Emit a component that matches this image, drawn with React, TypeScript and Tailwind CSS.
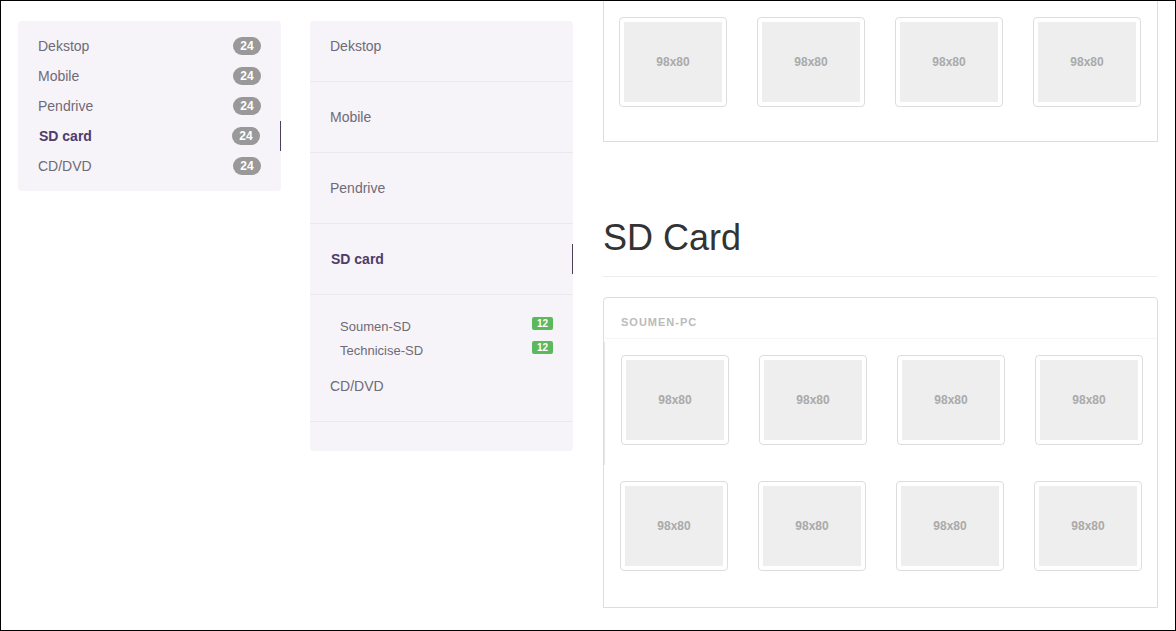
import React from "react";

const leftItems = ["Dekstop", "Mobile", "Pendrive", "SD card", "CD/DVD"];

function Thumb() {
  return (
    <div className="w-[108px] h-[90px] border border-[#dddddd] rounded-[4px] p-[4px] bg-white">
      <div className="w-[98px] h-[80px] bg-[#eeeeee] flex items-center justify-center text-[12px] font-bold text-[#aaaaaa]">
        98x80
      </div>
    </div>
  );
}

function ThumbRow() {
  return (
    <div className="grid grid-cols-[repeat(4,138px)]">
      {[0, 1, 2, 3].map((i) => (
        <div key={i} className="pl-[15px]">
          <Thumb />
        </div>
      ))}
    </div>
  );
}

export default function App() {
  return (
    <div className="w-[1176px] h-[631px] border border-black overflow-hidden bg-white font-['Liberation_Sans',Arial,sans-serif]">
      <div className="flex items-start pl-[17px]">
        {/* Left panel */}
        <div className="w-[263px] mt-[20px] rounded-[4px] bg-[#f6f4f9] pt-[10px] pb-[10px]">
          {leftItems.map((t) => {
            const active = t === "SD card";
            return (
              <div
                key={t}
                className={
                  "flex items-center justify-between h-[30px] pl-[20px] pr-[20px] " +
                  (active ? "border-r border-[#4b3f5c]" : "")
                }
              >
                <span
                  className={
                    active
                      ? "text-[14px] font-bold text-[#4e3b69] pl-px"
                      : "text-[14px] text-[#6f6a77]"
                  }
                >
                  {t}
                </span>
                <span className="w-[28px] h-[18px] rounded-[9px] bg-[#999999] text-white text-[12px] font-bold flex items-center justify-center leading-none">
                  24
                </span>
              </div>
            );
          })}
        </div>

        {/* Middle panel */}
        <div className="w-[263px] ml-[29px] mt-[20px] rounded-[4px] bg-[#f6f4f9] pb-[29px]">
          <div className="border-b border-[#ebe8f0] px-[20px] pt-[10px] pb-[20px]">
            <div className="py-[5px] leading-[20px] text-[14px] text-[#6f6a77]">Dekstop</div>
          </div>
          <div className="border-b border-[#ebe8f0] px-[20px] py-[20px]">
            <div className="py-[5px] leading-[20px] text-[14px] text-[#6f6a77]">Mobile</div>
          </div>
          <div className="border-b border-[#ebe8f0] px-[20px] py-[20px]">
            <div className="py-[5px] leading-[20px] text-[14px] text-[#6f6a77]">Pendrive</div>
          </div>
          <div className="border-b border-[#ebe8f0] pl-[20px] py-[20px]">
            <div className="py-[5px] leading-[20px] text-[14px] font-bold text-[#4e3b69] pl-px border-r border-[#4b3f5c]">
              SD card
            </div>
          </div>
          <div className="pt-[20px] pl-[30px] pr-[20px]">
            {["Soumen-SD", "Technicise-SD"].map((s) => (
              <div key={s} className="flex justify-between items-start h-[24px]">
                <span className="text-[13px] leading-[24px] text-[#6f6a77]">{s}</span>
                <span className="mt-[2px] w-[21px] h-[13px] rounded-[2px] bg-[#5cb85c] text-white text-[10px] font-bold flex items-center justify-center leading-none">
                  12
                </span>
              </div>
            ))}
          </div>
          <div className="border-b border-[#ebe8f0] px-[20px] pt-[8px] pb-[20px]">
            <div className="py-[5px] leading-[20px] text-[14px] text-[#6f6a77]">CD/DVD</div>
          </div>
        </div>

        {/* Right column */}
        <div className="w-[555px] ml-[30px]">
          <div className="border-x border-b border-[#dddddd] pt-[16px] pb-[34px]">
            <ThumbRow />
          </div>

          <div className="mt-[75px] pb-[17px] border-b border-[#eeeeee]">
            <h1 className="text-[36px] leading-[42px] text-[#333333] font-normal">SD Card</h1>
          </div>

          <div className="mt-[20px] border border-[#dddddd] rounded-t-[4px] h-[311px]">
            <div className="pl-[16px] pt-[17px] pb-[9px] border-b border-[#f5f5f5] ml-px">
              <div className="text-[11px] leading-[14px] font-bold tracking-[1px] text-[#bbbbbb]">
                SOUMEN-PC
              </div>
            </div>
            <div className="pt-[3px]">
              <div className="h-[123px] pt-[13px] pl-[1px] border-l border-[#e6e6e6]">
                <ThumbRow />
              </div>
              <div className="pt-[16px] pl-[1px]">
                <ThumbRow />
              </div>
            </div>
          </div>
        </div>
      </div>
    </div>
  );
}
